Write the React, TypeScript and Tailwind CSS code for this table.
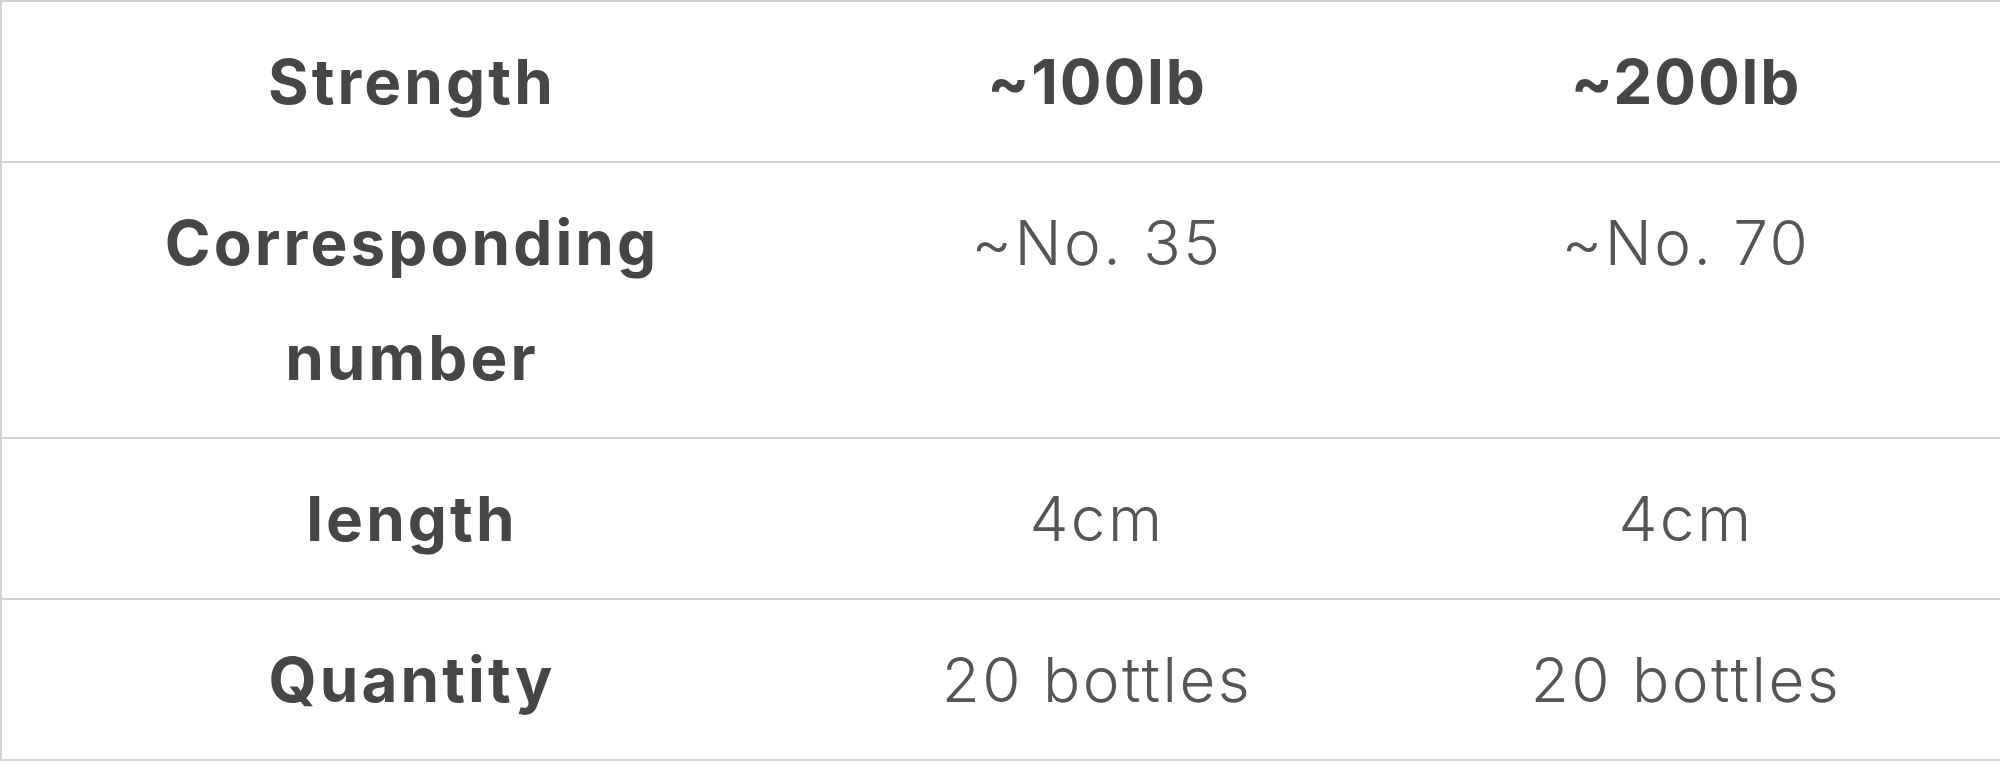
import React from 'react';

const rows = [
  { label: ['Strength'], values: ['~100lb', '~200lb'], head: true },
  { label: ['Corresponding', 'number'], values: ['~No. 35', '~No. 70'] },
  { label: ['length'], values: ['4cm', '4cm'] },
  { label: ['Quantity'], values: ['20 bottles', '20 bottles'] },
];

const App = () => {
  return (
    <div className="w-[2000px] h-[766px] bg-white overflow-hidden font-['Inter',sans-serif]">
      <div className="border-t-2 border-l-2 border-[#d2d2d2]">
        {rows.map((row, i) => (
          <div
            key={i}
            className="grid grid-cols-[820px_550px_628px] border-b-2 border-[#d2d2d2] text-[62px] leading-[115px]"
          >
            <div className="py-[22px] text-center font-bold tracking-[0.05em] text-[#464646]">
              {row.label.map((l) => (
                <div key={l}>{l}</div>
              ))}
            </div>
            {row.values.map((v, j) => (
              <div
                key={j}
                className={
                  row.head
                    ? 'py-[22px] text-center font-bold tracking-[0.03em] text-[#464646]'
                    : 'py-[22px] text-center font-light tracking-[0.04em] text-[#555555]'
                }
              >
                {v}
              </div>
            ))}
          </div>
        ))}
      </div>
    </div>
  );
};

export default App;
